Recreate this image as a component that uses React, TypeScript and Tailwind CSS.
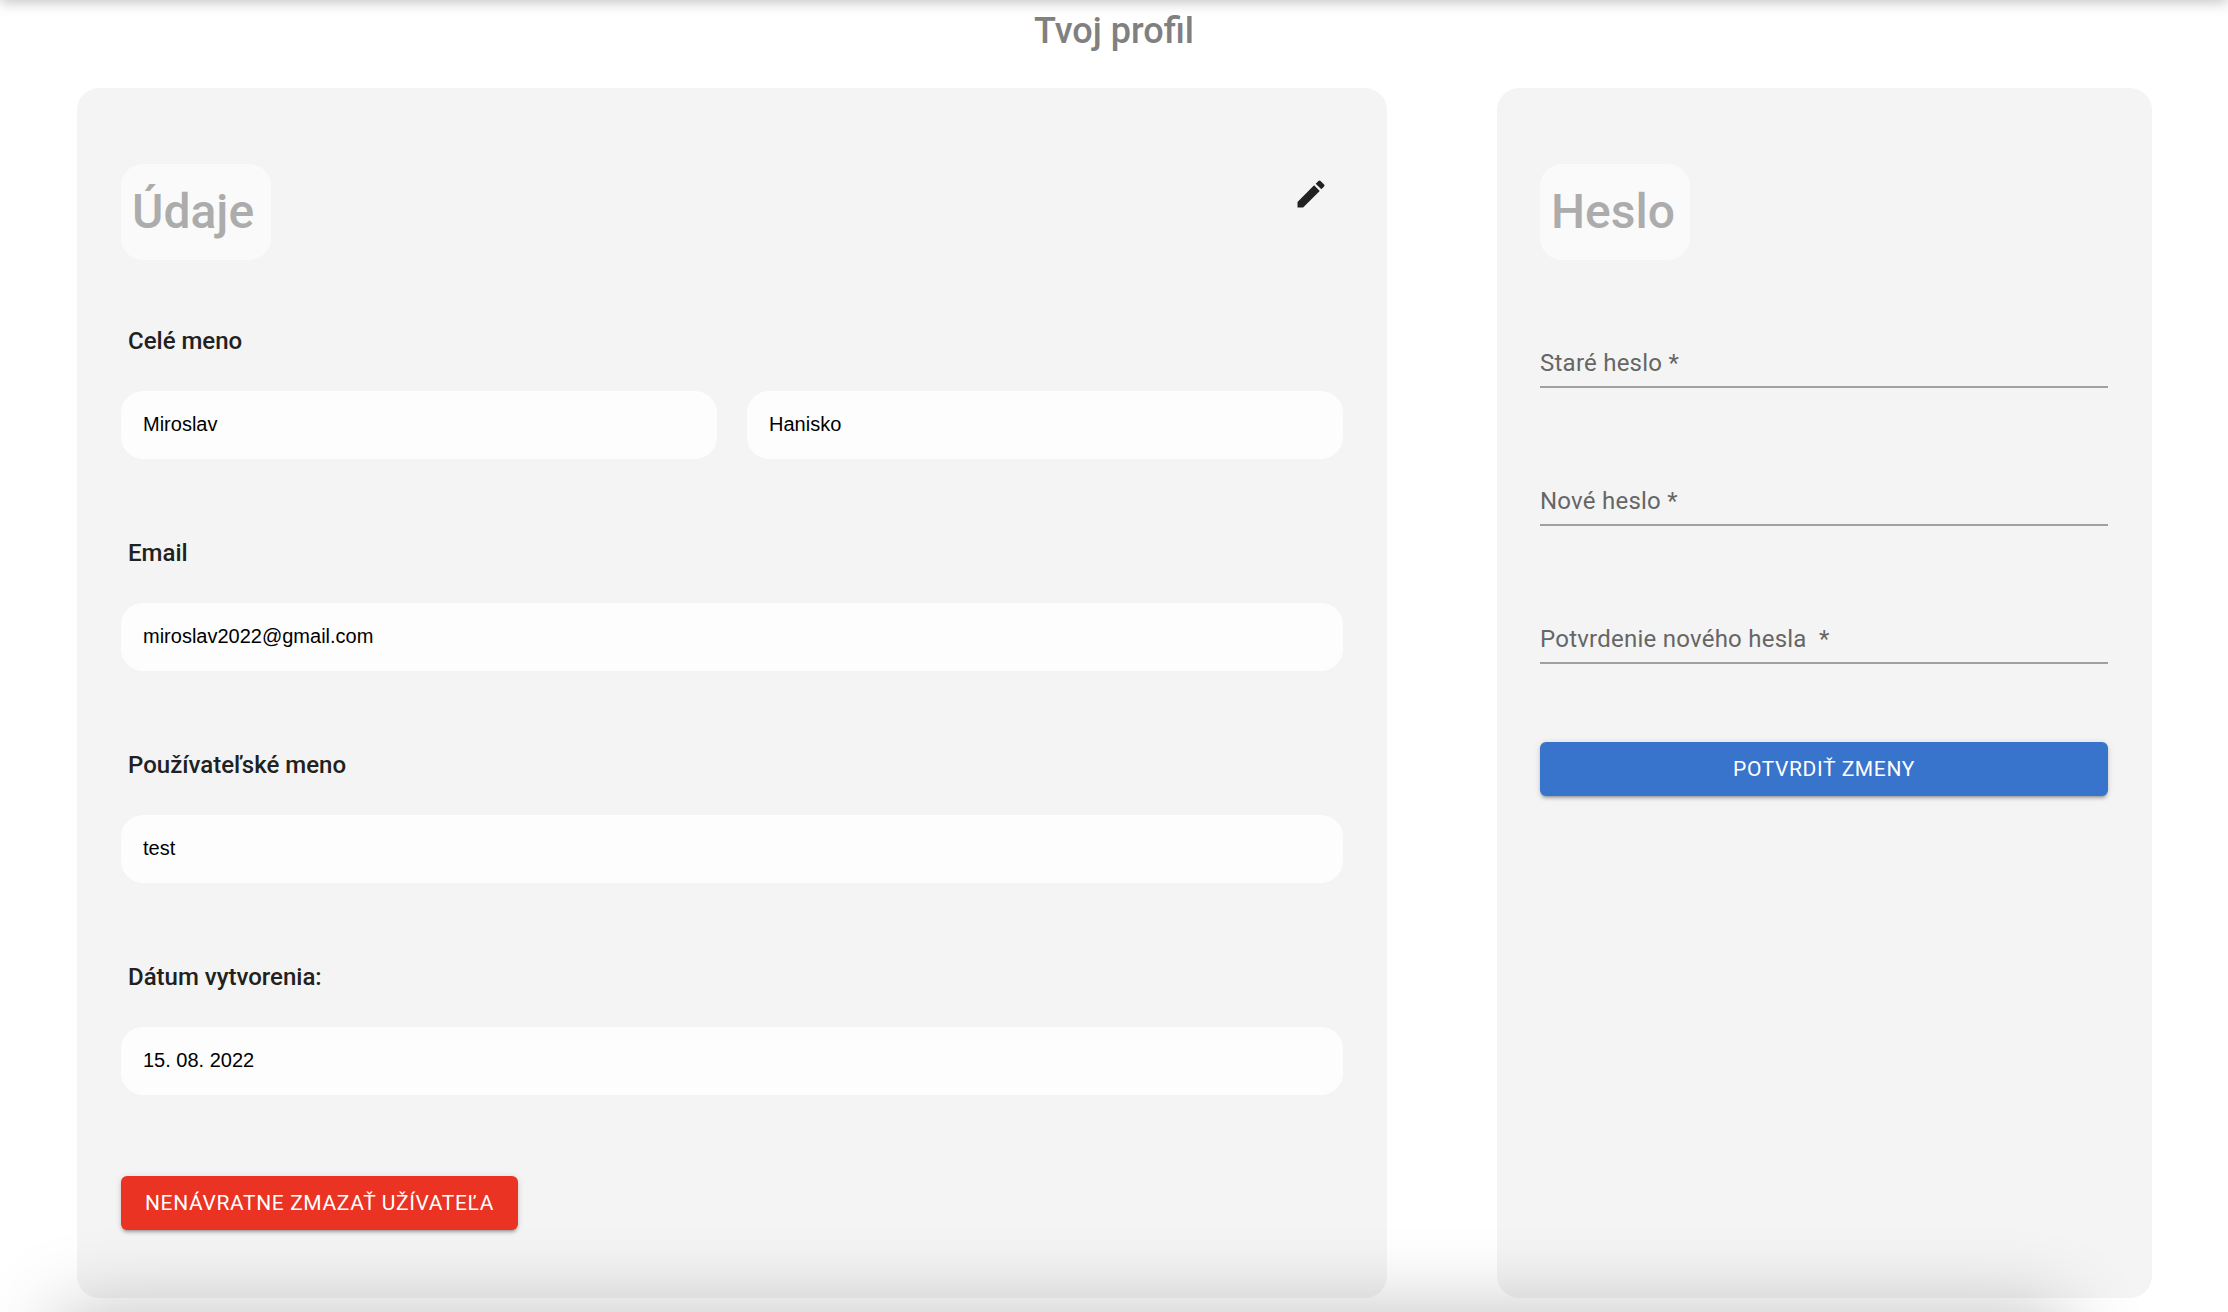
import { MdEdit } from "react-icons/md";

function SectionTitle({ children }: { children: string }) {
  return (
    <h2 className="flex h-24 w-[150px] items-center rounded-[22px] bg-[#fafafa] pl-[11px] text-5xl font-medium text-[#acacac]">
      {children}
    </h2>
  );
}

type DetailProps = { id: string; label: string; values: string[] };

function Detail({ id, label, values }: DetailProps) {
  return (
    <div className="flex flex-col gap-[34px]">
      <label htmlFor={`${id}-0`} className="px-[7px] text-2xl font-medium text-[#212121]">
        {label}
      </label>
      <div className="flex gap-[30px]">
        {values.map((value, i) => (
          <input
            key={value}
            id={`${id}-${i}`}
            aria-label={label}
            readOnly
            defaultValue={value}
            className="h-[68px] min-w-0 flex-1 rounded-[22px] bg-[#fdfdfd] px-[22px] pb-[2px] font-['Liberation_Sans',Arial,sans-serif] text-xl text-black outline-none"
          />
        ))}
      </div>
    </div>
  );
}

function PasswordField({ id, label }: { id: string; label: string }) {
  return (
    <div className="relative">
      <input
        id={id}
        type="password"
        required
        className="block h-12 w-full border-b-2 border-[#a0a0a0] bg-transparent text-2xl outline-none"
      />
      <label
        htmlFor={id}
        className="pointer-events-none absolute inset-x-0 top-[7px] whitespace-pre text-2xl tracking-[0.01em] text-[#666666]"
      >
        {label} *
      </label>
    </div>
  );
}

const buttonBase =
  "h-[54px] rounded-md px-6 pt-[2px] text-[21px] tracking-[0.03em] text-white uppercase shadow-[0_4px_2px_-3px_rgba(0,0,0,0.2),0_3px_3px_0_rgba(0,0,0,0.14),0_1px_7px_0_rgba(0,0,0,0.12)]";

export default function App() {
  return (
    <div className="relative min-h-screen overflow-hidden bg-white pb-[14px] font-[Roboto,sans-serif]">
      <div className="absolute inset-x-0 -top-4 h-4 shadow-[0_2px_14px_rgba(0,0,0,0.25)]" />

      <h1 className="pt-[9px] text-center text-4xl leading-[44px] font-medium text-[#808080]">Tvoj profil</h1>

      <main className="mt-[35px] grid grid-cols-[2fr_1fr] gap-[110px] pr-[76px] pl-[77px]">
        <section className="rounded-[22px] bg-[#f4f4f4] px-11 pt-[76px] pb-[68px]">
          <div className="flex items-start justify-between">
            <SectionTitle>Údaje</SectionTitle>
            <button type="button" aria-label="Upraviť údaje" className="px-[14px] py-3 text-[#212121]">
              <MdEdit size={36} />
            </button>
          </div>
          <form className="mt-[65px] flex flex-col gap-[78px]">
            <Detail id="name" label="Celé meno" values={["Miroslav", "Hanisko"]} />
            <Detail id="email" label="Email" values={["miroslav2022@gmail.com"]} />
            <Detail id="username" label="Používateľské meno" values={["test"]} />
            <Detail id="created" label="Dátum vytvorenia:" values={["15. 08. 2022"]} />
          </form>
          <button type="button" className={`mt-[81px] bg-[#ea3323] ${buttonBase}`}>
            Nenávratne zmazať užívateľa
          </button>
        </section>

        <section className="rounded-[22px] bg-[#f4f4f4] pt-[76px] pr-11 pl-[43px]">
          <SectionTitle>Heslo</SectionTitle>
          <form className="mt-20 flex flex-col">
            <div className="flex flex-col gap-[90px]">
              <PasswordField id="old-password" label="Staré heslo" />
              <PasswordField id="new-password" label="Nové heslo" />
              <PasswordField id="confirm-password" label="Potvrdenie nového hesla " />
            </div>
            <button type="button" className={`mt-[78px] bg-[#3874cb] ${buttonBase}`}>
              Potvrdiť zmeny
            </button>
          </form>
        </section>
      </main>

      <div className="pointer-events-none absolute -bottom-40 right-40 left-14 h-40 rounded-3xl shadow-[0_0_80px_rgba(0,0,0,0.25)]" />
    </div>
  );
}
